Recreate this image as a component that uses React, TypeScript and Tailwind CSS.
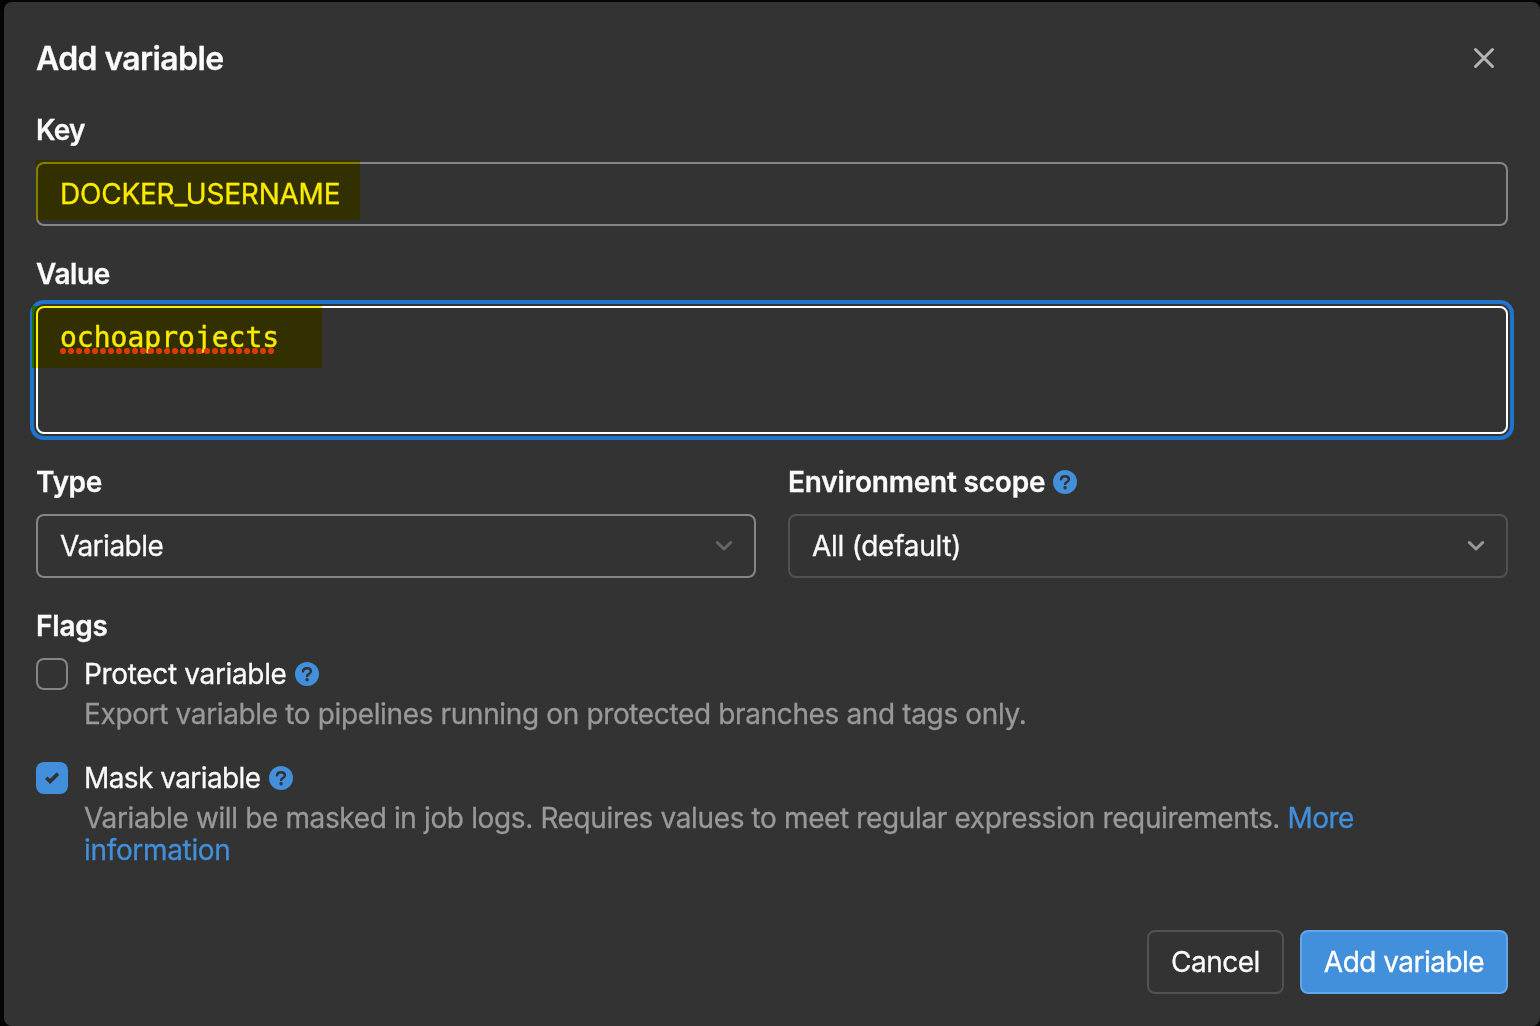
import type { ReactNode } from "react";

function HelpIcon({ className = "" }: { className?: string }) {
  return (
    <svg viewBox="0 0 24 24" className={`h-6 w-6 shrink-0 ${className}`} fill="none" aria-label="Help">
      <circle cx="12" cy="12" r="12" fill="#428fdc" />
      <path
        d="M8 9.300C8.200 7.300 9.800 6.200 12 6.200c2.300 0 3.900 1.200 3.900 3 0 1.500-.9 2.200-2.100 2.900-1.100.6-1.700 1-1.700 2"
        stroke="#333333"
        strokeWidth="2.500"
        strokeLinecap="round"
        strokeLinejoin="round"
      />
      <circle cx="12.100" cy="17.700" r="1.700" fill="#333333" />
    </svg>
  );
}

function Chevron({ className = "" }: { className?: string }) {
  return (
    <svg viewBox="0 0 18 12" className={`h-3 w-[18px] shrink-0 ${className}`} fill="none">
      <path d="M2.300 2.500 9 9l6.700-6.500" stroke="currentColor" strokeWidth="3" strokeLinecap="round" strokeLinejoin="round" />
    </svg>
  );
}

function Label({ children, className = "" }: { children: ReactNode; className?: string }) {
  return <div className={`flex h-8 items-center text-[28px] leading-8 font-semibold ${className}`}>{children}</div>;
}

export default function App() {
  return (
    <div className="h-[1026px] w-[1540px] overflow-hidden bg-[#050505] pt-0.5 pl-1 font-[Inter,sans-serif] text-[28px] leading-8 tracking-[-0.36px] text-[#fafafa] [-webkit-text-stroke:0.3px]">
      <div className="flex h-[1024px] flex-col rounded-lg bg-[#333333] pr-8 pl-8">
        <header className="flex h-28 items-center justify-between pr-3">
          <h2 className="pt-0.5 text-[32px] leading-10 font-semibold tracking-[-0.6px]">Add variable</h2>
          <button aria-label="Close">
            <svg viewBox="0 0 24 24" className="h-6 w-6" fill="none">
              <path d="m3.500 3.500 17 17M20.500 3.500l-17 17" stroke="#b5b5b5" strokeWidth="3" strokeLinecap="round" />
            </svg>
          </button>
        </header>

        <Label className="tracking-[-0.8px]">Key</Label>
        <div className="relative mt-4 flex h-16 items-center rounded-lg border-2 border-[#868686] px-[22px]">
          <span className="tracking-[-0.22px]">DOCKER_USERNAME</span>
          <div className="absolute -top-1 -left-0.5 h-[60px] w-[324px] bg-[#fff000] mix-blend-multiply" />
        </div>

        <Label className="mt-8 tracking-[-0.4px]">Value</Label>
        <div className="relative mt-4 h-32 rounded-lg border-2 border-white px-[22px] pt-[14px] shadow-[0_0_0_2px_#333333,0_0_0_6px_#1f75cb]">
          <span className="block font-['DejaVu_Sans_Mono',monospace] tracking-normal [-webkit-text-stroke:0.4px]">ochoaprojects</span>
          <div className="absolute top-[40px] left-[22px] h-[6px] w-[216px] bg-[radial-gradient(circle_at_3px_3px,#dc3d30_2.800px,transparent_3.300px)] bg-[length:8px_6px]" />
          <div className="absolute -top-0.5 -left-1.5 h-[62px] w-[290px] bg-[#fff000] mix-blend-multiply" />
        </div>

        <div className="mt-8 grid grid-cols-2 gap-8">
          <div>
            <Label className="tracking-[-0.3px]">Type</Label>
            <div className="mt-4 flex h-16 items-center justify-between rounded-lg border-2 border-[#868686] pr-[21px] pl-[22px]">
              <span className="tracking-[-0.5px]">Variable</span>
              <Chevron className="text-[#666666]" />
            </div>
          </div>
          <div>
            <Label className="tracking-[-0.2px]">
              Environment scope
              <HelpIcon className="ml-2" />
            </Label>
            <div className="mt-4 flex h-16 items-center justify-between rounded-lg border-2 border-[#525252] pr-[21px] pl-[22px]">
              <span className="tracking-[-0.28px]">All (default)</span>
              <Chevron className="text-[#999999]" />
            </div>
          </div>
        </div>

        <Label className="mt-8 tracking-[-0.2px]">Flags</Label>
        <div className="mt-4 flex gap-4">
          <div className="h-8 w-8 shrink-0 rounded-lg border-2 border-[#868686]" />
          <div>
            <div className="flex items-center tracking-[-0.34px]">
              Protect variable
              <HelpIcon className="ml-2" />
            </div>
            <p className="mt-2 text-[#999999]">Export variable to pipelines running on protected branches and tags only.</p>
          </div>
        </div>
        <div className="mt-8 flex gap-4">
          <div className="flex h-8 w-8 shrink-0 items-center justify-center rounded-lg bg-[#428fdc]">
            <svg viewBox="0 0 32 32" className="h-8 w-8">
              <path d="m10.200 15.700 3.900 3.700 7.900-7.800" fill="none" stroke="#333333" strokeWidth="3.600" />
            </svg>
          </div>
          <div>
            <div className="flex items-center tracking-[-0.58px]">
              Mask variable
              <HelpIcon className="ml-2" />
            </div>
            <p className="mt-2 w-[1400px] tracking-[-0.37px] text-[#999999]">
              Variable will be masked in job logs. Requires values to meet regular expression requirements.{" "}
              <a className="text-[#428fdc]">
                <span className="tracking-[-0.6px]">More</span>
                <br />
                <span className="tracking-[-0.33px]">information</span>
              </a>
            </p>
          </div>
        </div>

        <footer className="mt-auto mb-8 flex justify-end gap-4">
          <button className="h-16 w-[137px] rounded-lg border-2 border-[#525252] tracking-[-0.5px]">Cancel</button>
          <button className="h-16 w-[208px] rounded-lg border-2 border-[#63a6e9] bg-[#428fdc] tracking-[-0.52px] text-white">Add variable</button>
        </footer>
      </div>
    </div>
  );
}
